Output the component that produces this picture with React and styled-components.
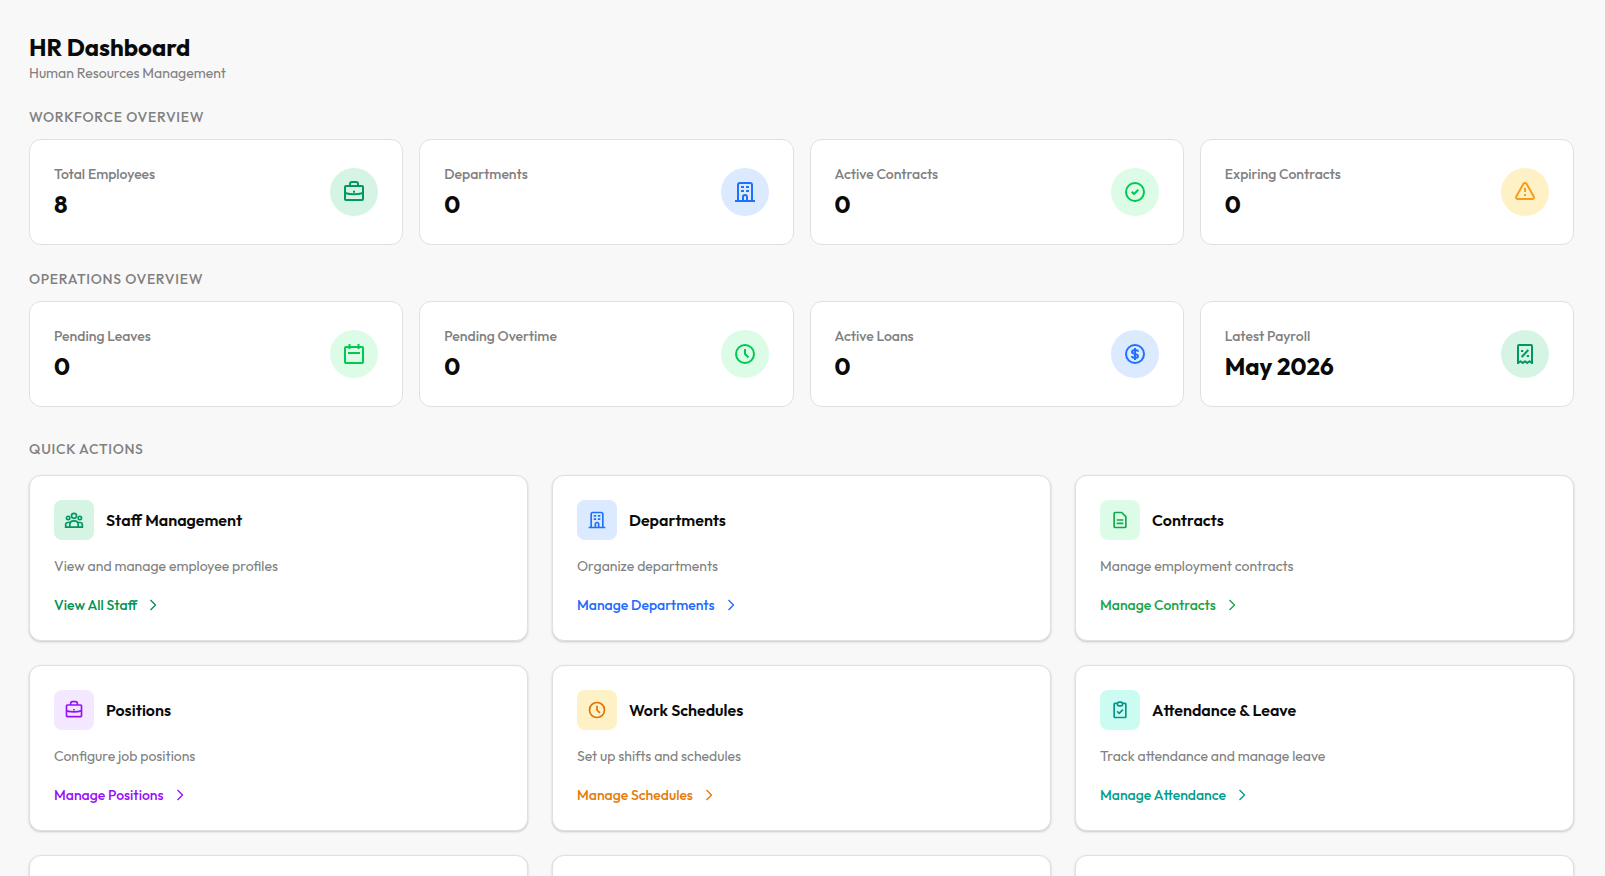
import React from "react";
import styled, { createGlobalStyle } from "styled-components";

const GlobalStyle = createGlobalStyle`
  * {
    box-sizing: border-box;
  }

  body {
    margin: 0;
    background-color: #f8f8f8;
    color: #0a0a0a;
    font-family: Outfit, Lato, sans-serif;
    font-size: 14px;
    line-height: 20px;
  }

  h1, h2, h3, p {
    margin: 0;
  }
`;

const tones = {
  emerald: { soft: "#d5f4e4", icon: "#009860", link: "#009252" },
  green: { soft: "#dcfce7", icon: "#00c951", link: "#16a34a" },
  forest: { soft: "#dcfce7", icon: "#12a84c", link: "#16a34a" },
  blue: { soft: "#dbeafe", icon: "#1f70ff", link: "#2268ff" },
  amber: { soft: "#fff1c6", icon: "#f99c17", link: "#e17100" },
  orange: { soft: "#fff1c6", icon: "#e17100", link: "#e47a08" },
  purple: { soft: "#f3e8ff", icon: "#9810fa", link: "#9810fa" },
  teal: { soft: "#cbfbf1", icon: "#009689", link: "#009e8e" }
};

const Page = styled.main`
  height: 100vh;
  overflow: hidden;
  padding: 31px 31px 0 29px;
`;

const Title = styled.h1`
  font-size: 24px;
  line-height: 32px;
  font-weight: 700;
`;

const Subtitle = styled.p`
  color: #808080;
`;

const Section = styled.section`
  margin-top: ${props => (props.$spaced ? "32px" : "24px")};
`;

const SectionTitle = styled.h2`
  margin-bottom: ${props => (props.$spaced ? "16px" : "12px")};
  font-size: 14px;
  line-height: 20px;
  font-weight: 500;
  letter-spacing: 0.05em;
  text-transform: uppercase;
  color: #808080;
`;

const StatGrid = styled.div`
  display: grid;
  grid-template-columns: repeat(4, 1fr);
  gap: 16px;
`;

const ActionGrid = styled.div`
  display: grid;
  grid-template-columns: repeat(3, 1fr);
  gap: 24px;
`;

const Card = styled.article`
  padding: 24px;
  background-color: #fff;
  border: 1px solid #e0e0e0;
  border-radius: 12px;
`;

const StatCard = styled(Card)`
  display: flex;
  align-items: center;
  justify-content: space-between;
`;

const StatLabel = styled.p`
  margin-bottom: 4px;
  font-weight: 500;
  color: #808080;
`;

const StatValue = styled.p`
  font-size: 24px;
  line-height: 32px;
  font-weight: 700;
`;

const StatIcon = styled.div`
  display: flex;
  align-items: center;
  justify-content: center;
  width: 48px;
  height: 48px;
  border-radius: 50%;
  color: ${props => tones[props.$tone].icon};
  background-color: ${props => tones[props.$tone].soft};
`;

const ActionCard = styled(Card)`
  min-height: 166px;
  box-shadow: 0 1px 3px rgba(0, 0, 0, 0.1), 0 1px 2px rgba(0, 0, 0, 0.1);
`;

const ActionHeader = styled.div`
  display: flex;
  align-items: center;
  gap: 12px;
  margin-bottom: 16px;
`;

const ActionIcon = styled(StatIcon)`
  width: 40px;
  height: 40px;
  border-radius: 8px;
`;

const ActionTitle = styled.h3`
  font-size: 16px;
  line-height: 24px;
  font-weight: 600;
`;

const ActionText = styled.p`
  margin-bottom: 19px;
  color: #808080;
`;

const ActionLink = styled.a`
  display: flex;
  align-items: center;
  gap: 8px;
  width: fit-content;
  font-weight: 500;
  text-decoration: none;
  color: ${props => tones[props.$tone].link};
`;

const Svg = styled.svg`
  width: ${props => props.$size}px;
  height: ${props => props.$size}px;
  fill: none;
  stroke: currentColor;
  stroke-width: ${props => props.$stroke};
  stroke-linejoin: round;
`;

const icons = {
  briefcase: (
    <>
      <rect x="3" y="6" width="18" height="14" rx="1" />
      <path d="M8 6V4a2 2 0 0 1 2-2h4a2 2 0 0 1 2 2v2M3 13c6 1.600 12 1.600 18 0M11 11.700h2" />
    </>
  ),
  building: (
    <path d="M2 21h20M5 21V5a2 2 0 0 1 2-2h10a2 2 0 0 1 2 2v16M10 21v-4a2 2 0 0 1 4 0v4M8 7h3M13 7h3M8 11h3M13 11h3" />
  ),
  check: (
    <>
      <circle cx="12" cy="12" r="9" />
      <path d="M8.700 11.700l2.300 2.300 4.300-4.200" />
    </>
  ),
  warning: (
    <path d="M10.300 4a2 2 0 0 1 3.400 0l7 12.600a1.600 1.600 0 0 1-1.400 2.400H4.700a1.600 1.600 0 0 1-1.400-2.400zM12 8v4M12 14v2" />
  ),
  calendar: (
    <>
      <rect x="3" y="5" width="18" height="16" rx="1" />
      <path d="M7.500 2v5M16.500 2v5M6 11h12" />
    </>
  ),
  clock: (
    <>
      <circle cx="12" cy="12" r="9" />
      <path d="M12 7v5l3.500 3.500" />
    </>
  ),
  dollar: (
    <>
      <circle cx="12" cy="12" r="9" />
      <path d="M15 9.800C15 8.600 13.800 8 12 8s-3 .6-3 1.900c0 1.400 1.300 1.700 3 2.100s3 .8 3 2.100S13.800 16 12 16s-3-.7-3-1.900M12 6v12" />
    </>
  ),
  receipt: (
    <>
      <path d="M5 22V4a1 1 0 0 1 1-1h12a1 1 0 0 1 1 1v18M5 21l2.500-1.800L9.800 21l2.200-1.800 2.200 1.800 2.300-1.800L19 21" />
      <path d="M8.700 15l6.600-7M8 9h2.200M13.800 14H16" />
    </>
  ),
  people: (
    <>
      <circle cx="12" cy="7" r="3" />
      <circle cx="5" cy="9.500" r="2" />
      <circle cx="19" cy="9.500" r="2" />
      <path d="M7 20.500V17c0-2.500 2-4 5-4s5 1.500 5 4v3.500M2 20.500v-3c0-1.500 1.200-2.500 3-2.500h2M22 20.500v-3c0-1.500-1.200-2.500-3-2.500h-2M1 20.500h22" />
    </>
  ),
  document: (
    <path d="M14 3H6a1 1 0 0 0-1 1v16a1 1 0 0 0 1 1h12a1 1 0 0 0 1-1V8zM8 12h8M8 16h8" />
  ),
  clipboard: (
    <>
      <path d="M9 4H6a1 1 0 0 0-1 1v15a1 1 0 0 0 1 1h12a1 1 0 0 0 1-1V5a1 1 0 0 0-1-1h-3" />
      <rect x="9" y="2.500" width="6" height="4.500" rx="2" />
      <path d="M8.500 13.500l2.500 2.500 4.500-4.500" />
    </>
  ),
  chevron: <path d="M8.250 4.500l7.500 7.500-7.500 7.500" />
};

const Icon = ({ name, size = 24, stroke = 2 }) => (
  <Svg viewBox="0 0 24 24" $size={size} $stroke={stroke} aria-hidden="true">
    {icons[name]}
  </Svg>
);

const workforce = [
  { label: "Total Employees", value: "8", icon: "briefcase", tone: "emerald" },
  { label: "Departments", value: "0", icon: "building", tone: "blue" },
  { label: "Active Contracts", value: "0", icon: "check", tone: "green" },
  { label: "Expiring Contracts", value: "0", icon: "warning", tone: "amber" }
];

const operations = [
  { label: "Pending Leaves", value: "0", icon: "calendar", tone: "green" },
  { label: "Pending Overtime", value: "0", icon: "clock", tone: "green" },
  { label: "Active Loans", value: "0", icon: "dollar", tone: "blue" },
  { label: "Latest Payroll", value: "May 2026", icon: "receipt", tone: "emerald" }
];

const actions = [
  {
    title: "Staff Management",
    text: "View and manage employee profiles",
    link: "View All Staff",
    icon: "people",
    tone: "emerald"
  },
  {
    title: "Departments",
    text: "Organize departments",
    link: "Manage Departments",
    icon: "building",
    tone: "blue"
  },
  {
    title: "Contracts",
    text: "Manage employment contracts",
    link: "Manage Contracts",
    icon: "document",
    tone: "forest"
  },
  {
    title: "Positions",
    text: "Configure job positions",
    link: "Manage Positions",
    icon: "briefcase",
    tone: "purple"
  },
  {
    title: "Work Schedules",
    text: "Set up shifts and schedules",
    link: "Manage Schedules",
    icon: "clock",
    tone: "orange"
  },
  {
    title: "Attendance & Leave",
    text: "Track attendance and manage leave",
    link: "Manage Attendance",
    icon: "clipboard",
    tone: "teal"
  }
];

const Stats = ({ title, items }) => (
  <Section>
    <SectionTitle>{title}</SectionTitle>
    <StatGrid>
      {items.map(item => (
        <StatCard key={item.label}>
          <div>
            <StatLabel>{item.label}</StatLabel>
            <StatValue>{item.value}</StatValue>
          </div>
          <StatIcon $tone={item.tone}>
            <Icon name={item.icon} />
          </StatIcon>
        </StatCard>
      ))}
    </StatGrid>
  </Section>
);

const Action = ({ title, text, link, icon, tone }) => (
  <ActionCard>
    <ActionHeader>
      <ActionIcon $tone={tone}>
        <Icon name={icon} size={20} />
      </ActionIcon>
      <ActionTitle>{title}</ActionTitle>
    </ActionHeader>
    <ActionText>{text}</ActionText>
    <ActionLink href="#" $tone={tone}>
      {link}
      <Icon name="chevron" size={16} />
    </ActionLink>
  </ActionCard>
);

export default () => {
  return (
    <>
      <GlobalStyle />
      <Page>
        <header>
          <Title>HR Dashboard</Title>
          <Subtitle>Human Resources Management</Subtitle>
        </header>
        <Stats title="Workforce Overview" items={workforce} />
        <Stats title="Operations Overview" items={operations} />
        <Section $spaced>
          <SectionTitle $spaced>Quick Actions</SectionTitle>
          <ActionGrid>
            {actions.map(action => (
              <Action key={action.title} {...action} />
            ))}
            <ActionCard />
            <ActionCard />
            <ActionCard />
          </ActionGrid>
        </Section>
      </Page>
    </>
  );
};
